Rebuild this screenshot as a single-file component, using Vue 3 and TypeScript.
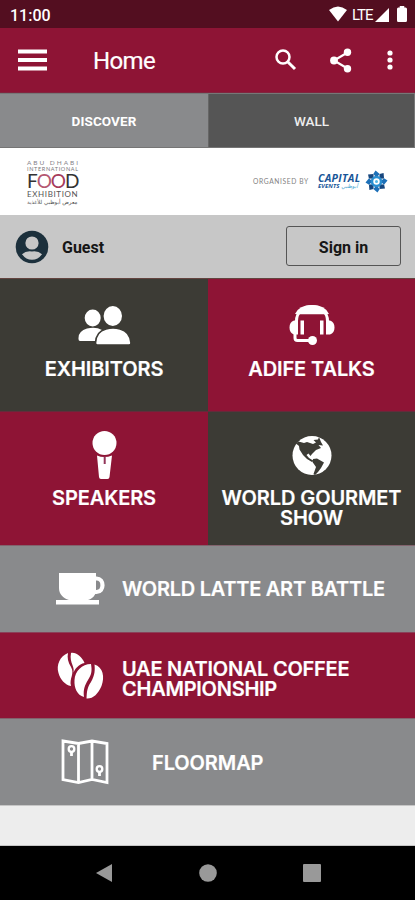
<script setup lang="ts">
interface Tile {
  id: string
  lines: string[]
  tone: 'dark' | 'wine'
}

const tiles: Tile[] = [
  { id: 'exhibitors', lines: ['EXHIBITORS'], tone: 'dark' },
  { id: 'talks', lines: ['ADIFE TALKS'], tone: 'wine' },
  { id: 'speakers', lines: ['SPEAKERS'], tone: 'wine' },
  { id: 'gourmet', lines: ['WORLD GOURMET', 'SHOW'], tone: 'dark' },
]
const petals: number[] = [0, 45, 90, 135, 180, 225, 270, 315]
</script>

<template>
  <div class="screen">
    <div class="status">
      <span class="clock">11:00</span>
      <svg class="wifi" width="18" height="16" viewBox="0 0 18 16"><path d="M0 4Q9-3 18 4L9 15.500Z" fill="#fff" /></svg>
      <span class="lte">LTE</span>
      <svg class="signal" width="14" height="14" viewBox="0 0 14 14"><path d="M14 0V14H0Z" fill="#fff" /></svg>
      <svg class="battery" width="10" height="16" viewBox="0 0 11 16" preserveAspectRatio="none"><path d="M3 0H8V1.500H9.500Q11 1.500 11 3V14.500Q11 16 9.500 16H1.500Q0 16 0 14.500V3Q0 1.500 1.500 1.500H3Z" fill="#fff" /></svg>
    </div>

    <header class="toolbar">
      <svg class="menu" width="29" height="22" viewBox="0 0 29 22"><path d="M0 2.500H29M0 11H29M0 19.500H29" stroke="#fff" stroke-width="4" /></svg>
      <h1>Home</h1>
      <svg class="search" width="22" height="22" viewBox="0 0 22 22" fill="none" stroke="#fff"><circle cx="8" cy="8" r="6.500" stroke-width="2.500" /><path d="M12.700 12.700L20 20" stroke-width="3" /></svg>
      <svg class="share" width="22" height="25" viewBox="0 0 22 25"><path d="M17.500 4.500L4 12.500L17.500 20.500" fill="none" stroke="#fff" stroke-width="2.200" /><g fill="#fff"><circle cx="17.500" cy="4.200" r="3.700" /><circle cx="4" cy="12.500" r="3.900" /><circle cx="17.500" cy="20.800" r="3.700" /></g></svg>
      <svg class="more" width="6" height="20" viewBox="0 0 6 20" fill="#fff"><circle cx="3" cy="3" r="2.600" /><circle cx="3" cy="10" r="2.600" /><circle cx="3" cy="17" r="2.600" /></svg>
    </header>

    <nav class="tabs">
      <span class="tab active">DISCOVER</span>
      <span class="tab">WALL</span>
    </nav>

    <section class="banner">
      <div class="food-logo">
        <span class="city">ABU DHABI</span>
        <span class="intl">INTERNATIONAL</span>
        <span class="food">F<i>O</i><b>O</b>D</span>
        <span class="exhibition">EXHIBITION</span>
        <span class="arabic" dir="rtl">معرض أبوظبي للأغذية</span>
      </div>
      <div class="organiser">
        <span class="by">ORGANISED BY</span>
        <div class="capital">
          <span class="capital-name">CAPITAL</span>
          <span class="events">EVENTS <em>أبوظبي</em></span>
        </div>
        <svg class="flower" width="25" height="25" viewBox="-12.500 -12.500 25 25">
          <path v-for="angle in petals" :key="angle" d="M0-4L-3.200-7.500L-1-11L3.200-7.500Z" :fill="angle % 90 ? '#17477e' : '#1d70b8'" :transform="`rotate(${angle})`" />
          <circle r="4.500" fill="none" stroke="#298ed0" stroke-width="2.500" />
          <circle r="1.500" fill="#56b9e5" />
        </svg>
      </div>
    </section>

    <section class="account">
      <svg class="avatar" width="34" height="34" viewBox="0 0 34 34"><circle cx="17" cy="17" r="16.300" fill="#1c303c" /><circle cx="17" cy="13" r="6.600" fill="#c7c7c7" /><path d="M7 24.300Q11 20.500 17 21.500Q23 20.500 27 24.300Q23 29.800 17 29.800Q11 29.800 7 24.300Z" fill="#c7c7c7" /></svg>
      <span class="guest">Guest</span>
      <button class="signin" type="button">Sign in</button>
    </section>

    <main>
      <div class="tiles">
        <div v-for="tile in tiles" :key="tile.id" class="tile" :class="[tile.tone, tile.id]">
          <svg width="60" height="50" viewBox="0 0 60 50">
            <g v-if="tile.id === 'exhibitors'" fill="#fff">
              <ellipse cx="18.700" cy="18" rx="8" ry="8.500" />
              <path d="M4.500 38Q4.500 31 13 28.500Q22 26.500 28 30L24 41H6Q4.500 41 4.500 39Z" />
              <path d="M21.500 43Q22 31.500 32 29Q39 27 46 29Q56 31.500 57 43Q57 45 55 45H23.500Q21.500 45 21.500 43Z" stroke="#3c3b35" stroke-width="1.600" />
              <ellipse cx="38.800" cy="16" rx="9.200" ry="10" />
            </g>
            <g v-else-if="tile.id === 'talks'">
              <path d="M13 14Q17 5 30 5Q43 5 47 14L43 14.300H17.500Z" fill="#fff" />
              <path d="M14.500 21C14.500 1.500 45.500 1.500 45.500 21" fill="none" stroke="#fff" stroke-width="3" />
              <path d="M12 20.500Q7.500 22 7.500 27.500Q7.500 33 12 34.500H16V20.500ZM48 20.500Q52.500 22 52.500 27.500Q52.500 33 48 34.500H44V20.500ZM18.500 20.500H22V34.500H18.500ZM38 20.500H41.500V34.500H38Z" fill="#fff" />
              <path d="M13 34V38Q13 40.500 15.500 40.500H30" fill="none" stroke="#fff" stroke-width="3" /><circle cx="30.500" cy="40.500" r="4.500" fill="#fff" />
            </g>
            <g v-else-if="tile.id === 'speakers'">
              <circle cx="30.500" cy="13" r="12" fill="#fff" />
              <path d="M23 25.500Q30 28.500 38 25.500L35.500 47Q35.300 49 33.500 49H27Q25.200 49 25 47Z" fill="#fff" />
              <path d="M30.700 26.500V34" stroke="#92365a" stroke-width="2" />
            </g>
            <g v-else>
              <circle cx="30" cy="25.500" r="19.500" fill="#fff" />
              <path d="M16.500 11.500L22 13L25 12L31 14L34 12.500L31.500 10L36 9.500L37 7L39 12L41 15.500L36.500 15L39 18L34 20L30 24L28.500 26L26.500 23.500L24.500 25L27 28L31 30.500L30 32L25 29L21 25L17.500 19.500L17 16L14 13.500ZM31 29L35 28.500L42 32.500L39 38L36 42L33 45L31.500 44L34 37L30.500 32Z" fill="#3c3b35" />
              <path d="M19.500 10.500L25 7L32 7.500L27 10Z" fill="#fff" />
            </g>
          </svg>
          <div class="label"><span v-for="line in tile.lines" :key="line">{{ line }}</span></div>
        </div>
      </div>

      <div class="row gray latte">
        <svg width="50" height="33" viewBox="0 0 50 33"><path d="M3 0H40V18C40 22 36 26 32 27H43V31.500H0V27H13C7 25 3 21 3 15Z" fill="#fff" /><path d="M39 5.500H40.500C48.500 5.500 48.500 19 40.500 19H39" fill="none" stroke="#fff" stroke-width="4.200" /></svg>
        <div class="label"><span>WORLD LATTE ART BATTLE</span></div>
      </div>
      <div class="row wine coffee">
        <svg width="48" height="48" viewBox="0 0 48 48" fill="#fff">
          <path d="M11 1C3 4-1 13 1.500 21C3 27 8 33 14 34C12 26 18 22 14 15C11 10 10 6 11 1Z" />
          <path d="M14 1C19 0 25 5 27.500 11C22 12 17 17 16 23C19 14 12 12 14 1Z" />
          <path d="M34 12C25 12 18 19 17.500 28C17 36 20 43 27 45C26 37 28 33 31 28C35 22 35 18 34 12Z" />
          <path d="M37.500 12.500C46 15 48 25 44.500 34C41 42 36 47 29.500 46.500C30 39 30 36 34 30C38 23 38 18 37.500 12.500Z" />
        </svg>
        <div class="label"><span>UAE NATIONAL COFFEE</span><span>CHAMPIONSHIP</span></div>
      </div>
      <div class="row gray floor">
        <svg width="48" height="46" viewBox="0 0 48 46" fill="none" stroke="#fff" stroke-width="2.800">
          <path d="M2 2L17.500 4.500L31 2L46 4.500V43.500L31 40.500L17.500 43.500L2 40.500ZM17.500 4.500V43M31 2V40.500" />
          <circle cx="10.500" cy="10" r="2.800" stroke-width="2.300" /><path d="M10.500 12V17" />
          <circle cx="38.500" cy="30" r="2.800" stroke-width="2.300" /><path d="M38.500 32V37" />
        </svg>
        <div class="label"><span>FLOORMAP</span></div>
      </div>
    </main>

    <div class="blank"></div>
    <footer class="navbar">
      <svg width="18" height="20" viewBox="0 0 18 20"><path d="M17 1V19L1 10Z" fill="#999" /></svg>
      <svg width="18" height="18" viewBox="0 0 18 18"><circle cx="9" cy="9" r="8.800" fill="#999" /></svg>
      <svg width="18" height="18" viewBox="0 0 18 18"><rect width="18" height="18" rx="1" fill="#999" /></svg>
    </footer>
  </div>
</template>

<style>
body { background: #000; }
</style>

<style scoped>
* { box-sizing: border-box; }
svg { display: block; flex: none; overflow: visible; }
.screen { width: 415px; height: 900px; overflow: hidden; display: flex; flex-direction: column; font-family: Roboto, sans-serif; color: #fff; background: #ededed; }
.screen > * { flex: none; }
.status { height: 28px; display: flex; align-items: center; padding: 0 8px 0 10px; background: #530e20; }
.clock { font-size: 16px; font-weight: 500; margin-right: auto; padding-top: 2px; }
.lte { width: 22px; font-size: 15px; margin: 1px 1px 0 5px; letter-spacing: -1px; }
.signal { margin-top: 1px; }
.battery { margin-left: 8px; }
.toolbar { height: 65px; display: flex; align-items: center; padding: 0 22px 0 18px; background: #8e1435; border-bottom: 1px solid #81253f; }
h1 { margin: 2px auto 0 46px; font-size: 24px; font-weight: 400; line-height: 28px; letter-spacing: -.6px; -webkit-text-stroke: .2px #fff; }
.search { margin-right: 33px; }
.share { margin-right: 35px; }
.tabs { height: 55px; display: grid; grid-template-columns: 209px 1fr; background: #555; border-top: 1px solid #777; border-bottom: 1px solid #757575; }
.tab { display: flex; align-items: center; justify-content: center; font-size: 13.5px; font-weight: 500; color: #eee; border-right: 1px solid #777; }
.tab.active { background: #898a8c; color: #fff; font-weight: 700; letter-spacing: .1px; border-right-color: #666; }
.banner { height: 67px; padding: 12px 26px 0; display: flex; justify-content: space-between; background: #fff; }
.food-logo { display: flex; flex-direction: column; width: 54px; padding-left: 1px; font-family: Lato, sans-serif; white-space: nowrap; color: #555; }
.city { font-size: 6.5px; line-height: 6px; letter-spacing: 1.95px; color: #85838a; }
.intl { font-size: 5.5px; line-height: 7px; letter-spacing: .66px; color: #77757a; }
.food { font-size: 19px; line-height: 16px; letter-spacing: -1px; color: #333; }
.food i { font-style: normal; color: #b45772; }
.food b { font-weight: 400; color: #a63a5b; }
.exhibition { font-size: 8px; line-height: 11px; letter-spacing: .62px; }
.arabic { width: 52px; text-align: left; font: 5.5px/5px "DejaVu Sans", sans-serif; }
.organiser { display: flex; align-items: center; height: 26px; margin-top: 8px; }
.by { width: 65px; font: 6.7px/9px Lato, sans-serif; letter-spacing: .6px; color: #828282; white-space: nowrap; }
.capital { width: 45px; margin-right: 1px; display: flex; flex-direction: column; font-family: "Open Sans", sans-serif; font-weight: 700; font-style: italic; white-space: nowrap; color: #185598; }
.capital-name { font-size: 10.5px; line-height: 10px; letter-spacing: .3px; }
.events { font-size: 6px; line-height: 7px; letter-spacing: .1px; }
.events em { font-family: "DejaVu Sans", sans-serif; font-size: 5.5px; font-weight: 400; color: #48a6d2; }
.account { height: 63px; display: flex; align-items: center; padding: 0 14px 0 15px; background: #c7c7c7; color: #161616; }
.guest { margin: 2px auto 0 13px; font-size: 16px; font-weight: 700; letter-spacing: 0; }
.signin { width: 115px; height: 40px; margin-top: -1px; padding: 2px 0 0; border: 1.5px solid #555; border-radius: 3px; background: transparent; color: #161616; font: 700 16px Roboto, sans-serif; letter-spacing: 0; }
.tiles { display: grid; grid-template-columns: 208px 207px; grid-template-rows: 133px 134px; }
.tile { display: flex; flex-direction: column; align-items: center; padding-top: 22px; border-top: 1px solid #63443f; }
.speakers, .gourmet { padding-top: 19px; border-top-color: #642b3b; }
.tile svg { margin-top: -1px; }
.dark { background: #3c3b35; }
.wine { background: #8e1435; }
.gray { background: #898a8c; }
.label { display: flex; flex-direction: column; font: 600 20px/20px Inter, sans-serif; letter-spacing: -.1px; white-space: nowrap; text-align: left; -webkit-text-stroke: .2px #fff; }
.tile .label { align-items: center; margin-top: 9px; }
.speakers .label, .gourmet .label { margin-top: 8px; }
.row { height: 87px; display: flex; align-items: center; border-top: 1px solid #82636d; }
.coffee { height: 86px; border-color: #8a4159; }
.latte { padding-left: 56px; }
.latte .label { margin-left: 16px; letter-spacing: -.26px; }
.coffee { padding-left: 57px; }
.coffee .label { margin-left: 17px; margin-top: 6px; letter-spacing: -.25px; }
.floor { padding-left: 61px; }
.floor .label { margin-left: 43px; margin-top: 1px; }
.blank { height: 41px; background: #ededed; border-top: 1px solid #c6c6c6; border-bottom: 1px solid #c6c6c6; }
.navbar { height: 54px; display: flex; align-items: center; justify-content: center; gap: 86px; background: #000; }
</style>
